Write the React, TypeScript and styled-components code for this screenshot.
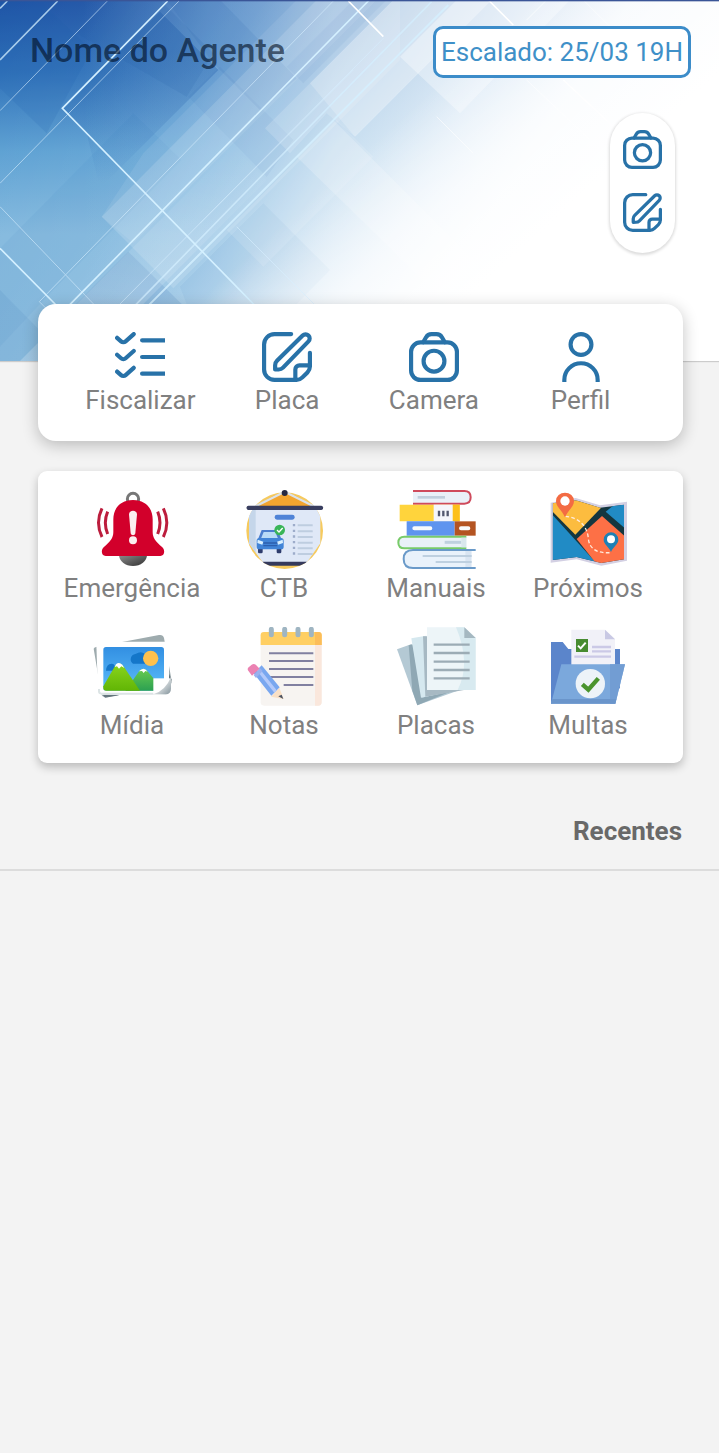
import React from "react";
import styled, { createGlobalStyle } from "styled-components";

const GlobalStyle = createGlobalStyle`
  *, *::before, *::after { box-sizing: border-box; }
  body {
    margin: 0;
    background: #f3f3f3;
    font-family: Roboto, "Liberation Sans", sans-serif;
  }
  button { font: inherit; color: inherit; }
`;

const Page = styled.main`
  min-height: 100vh;
  background: #f3f3f3;
`;

const Hero = styled.header`
  position: relative;
  padding: 26px 28px 108px 30px;
  background: #fff;
  box-shadow: 0 1px 1px rgba(0, 0, 0, 0.16);
`;

const Backdrop = styled.svg`
  position: absolute;
  inset: 0;
  width: 100%;
  height: 100%;
`;

const TopBar = styled.div`
  position: relative;
  display: flex;
  justify-content: space-between;
  align-items: flex-start;
`;

const AgentName = styled.h1`
  margin: 0;
  padding-top: 4px;
  font-size: 34px;
  line-height: 40px;
  font-weight: 500;
  color: rgba(0, 12, 30, 0.62);
`;

const Shift = styled.button`
  height: 52px;
  padding: 0 5px;
  border: 3px solid #3c8cc9;
  border-radius: 10px;
  background: #fff;
  color: #3f90c8;
  font-size: 26px;
  line-height: 40px;
  white-space: nowrap;
  cursor: pointer;
`;

const Shortcuts = styled.nav`
  position: relative;
  display: flex;
  flex-direction: column;
  align-items: center;
  gap: 24px;
  width: 65px;
  margin: 35px 16px 0 auto;
  padding: 17px 0 21px;
  border-radius: 33px;
  background: #fff;
  box-shadow: 0 1px 3px 1px rgba(0, 0, 0, 0.14);
`;

const IconButton = styled.button`
  display: flex;
  padding: 0;
  border: 0;
  background: none;
  cursor: pointer;
`;

const Content = styled.div`
  position: relative;
  display: flex;
  flex-direction: column;
  gap: 30px;
  margin-top: -57px;
  padding: 0 36px 0 38px;
`;

const Card = styled.section<{ $kind: "quick" | "menu" }>`
  display: grid;
  grid-template-columns: repeat(4, 1fr);
  row-gap: 21px;
  padding: ${(p) => (p.$kind === "quick" ? "28px 29px 23px" : "19px 19px 20px 18px")};
  border-radius: ${(p) => (p.$kind === "quick" ? "18px" : "9px")};
  background: #fff;
  box-shadow: ${(p) =>
    p.$kind === "quick"
      ? "0 4px 16px rgba(0, 0, 0, 0.24)"
      : "0 4px 10px rgba(0, 0, 0, 0.24)"};
`;

const Tile = styled.button`
  display: flex;
  flex-direction: column;
  align-items: center;
  padding: 0;
  border: 0;
  background: none;
  color: #808080;
  font-size: 26px;
  line-height: 36px;
  cursor: pointer;
`;

const Glyph = styled.svg<{ $size: number }>`
  display: block;
  width: ${(p) => p.$size}px;
  height: ${(p) => p.$size}px;
  fill: none;
  stroke: #2872a8;
  stroke-width: 2;
  stroke-linecap: round;
  stroke-linejoin: round;
`;

const Picture = styled.svg`
  display: block;
  width: 80px;
  height: 80px;
`;

const SectionTitle = styled.h2`
  margin: 0;
  padding: 52px 37px 22px;
  border-bottom: 2px solid #dcdcdc;
  text-align: right;
  font-size: 26px;
  line-height: 32px;
  font-weight: 700;
  color: #696969;
`;

function HeroBackdrop() {
  return (
    <Backdrop viewBox="0 0 2157 1083" preserveAspectRatio="xMidYMin slice" aria-hidden="true">
      <defs>
        <linearGradient id="sky" x1="0" y1="0" x2="0" y2="1">
          <stop offset="0" stopColor="#1f54a6" />
          <stop offset=".2" stopColor="#2d70b9" />
          <stop offset=".42" stopColor="#5a9fd2" />
          <stop offset=".65" stopColor="#80b7dd" />
          <stop offset="1" stopColor="#83b8dd" />
        </linearGradient>
        <linearGradient id="glow" gradientUnits="userSpaceOnUse" x1="0" y1="0" x2="1314" y2="876">
          <stop offset="0" stopColor="#fff" stopOpacity="0" />
          <stop offset=".2" stopColor="#fff" stopOpacity=".04" />
          <stop offset=".42" stopColor="#fff" stopOpacity=".1" />
          <stop offset=".58" stopColor="#fff" stopOpacity=".26" />
          <stop offset=".7" stopColor="#fff" stopOpacity=".5" />
          <stop offset=".86" stopColor="#fafcff" stopOpacity=".78" />
          <stop offset="1" stopColor="#fbfdff" stopOpacity=".93" />
        </linearGradient>
        <linearGradient id="whiteout" gradientUnits="userSpaceOnUse" x1="1040" y1="500" x2="1400" y2="900">
          <stop offset="0" stopColor="#fff" stopOpacity="0" />
          <stop offset=".5" stopColor="#fff" stopOpacity=".65" />
          <stop offset="1" stopColor="#fff" />
        </linearGradient>
        <linearGradient id="topLight" gradientUnits="userSpaceOnUse" x1="250" y1="0" x2="1000" y2="0">
          <stop offset="0" stopColor="#86bce4" stopOpacity="0" />
          <stop offset=".5" stopColor="#86bce4" stopOpacity=".5" />
          <stop offset="1" stopColor="#a6cbe8" stopOpacity=".75" />
        </linearGradient>
        <linearGradient id="fadeDown" x1="0" y1="0" x2="0" y2="1">
          <stop offset="0" stopColor="#fff" stopOpacity="0" />
          <stop offset="1" stopColor="#fff" stopOpacity=".22" />
        </linearGradient>
        <linearGradient id="shade" gradientUnits="userSpaceOnUse" x1="450" y1="150" x2="420" y2="560">
          <stop offset="0" stopColor="#1d5aa8" stopOpacity=".34" />
          <stop offset="1" stopColor="#1d5aa8" stopOpacity="0" />
        </linearGradient>
      </defs>
      <rect width="2157" height="1083" fill="url(#sky)" />
      <rect width="2157" height="1083" fill="url(#topLight)" />
      <rect width="2157" height="1083" fill="url(#glow)" />
      <path d="M190 325 480 35 655 210 300 565 260 400Z" fill="url(#shade)" />
      <g fill="#1d5aa8">
        <path d="M0 0H115L275 150 140 400 0 265Z" opacity=".14" />
        <path d="M230 100 330 0H480L640 160 560 290Z" opacity=".12" />
        <path d="M500 0H660L890 235 780 330 640 190Z" opacity=".1" />
        <path d="M0 745 400 340 545 480 160 870 0 1040Z" opacity=".05" />
        <path d="M0 870 210 1083H0Z" opacity=".08" />
        <path d="M385 755 545 912 450 1010H130Z" opacity=".12" />
        <path d="M565 290 660 200 880 420 800 530Z" opacity=".06" />
        <path d="M790 610 990 810 890 912H560L540 860Z" opacity=".05" />
        <path d="M860 200 1060 0H1160L910 250Z" opacity=".07" />
      </g>
      <g fill="#fff">
        <path d="M305 650 950 0H1200V180L520 865Z" opacity=".14" />
        <path d="M430 460 890 0H1130L400 730 305 650Z" opacity=".08" />
        <path d="M795 385 1180 0H1475L1065 410 980 340 870 460Z" opacity=".16" />
        <path d="M930 250 1180 0H1475L1065 410Z" opacity=".2" />
        <path d="M1200 170 1370 0H1710L1380 340Z" opacity=".34" />
        <path d="M60 1083 700 440 800 540 260 1083Z" fill="url(#fadeDown)" />
        <path d="M680 690 1010 360 1120 470 790 800Z" opacity=".12" />
        <path d="M890 470 1000 360 1440 800 1330 900Z" opacity=".2" />
      </g>
      <rect width="2157" height="1083" fill="url(#whiteout)" />
      <g fill="none" stroke="#d4f0ff" strokeWidth="5">
        <path d="M503 3 187 325 775 927" />
        <path d="M1108 0 180 944" />
        <path d="M1200 160 1345 15M1200 160 430 932" strokeWidth="6" opacity=".8" />
        <path d="M1295 5 390 932" opacity=".7" />
        <path d="M0 745 180 927" />
        <path d="M22 3 0 25M173 3 0 180" opacity=".75" />
        <path d="M1045 3 1150 110M1465 0 1540 75" stroke="#fff" />
        <path d="M1690 240 1840 380" stroke="#fff" />
      </g>
      <g fill="none" stroke="#d8efff" strokeWidth="3" opacity=".6">
        <path d="M322 3 0 332M540 0 0 550M1000 3 118 905 140 927" />
        <path d="M0 620 295 927M1150 115 345 927M710 680 950 920" />
        <path d="M1750 0 1830 80M1580 240 1770 420M1640 0 1580 60M1310 350 1420 460" stroke="#fff" />
        <path d="M600 670 1060 210" />
      </g>
      <rect width="2157" height="4" fill="#3a5597" />
    </Backdrop>
  );
}

const CameraIcon = ({ size }: { size: number }) => (
  <Glyph $size={size} viewBox="0 0 24 24" aria-hidden="true">
    <path d="M6.800 4.900 8.200 2.500A3 3 0 0 1 10.800 1h2.400a3 3 0 0 1 2.600 1.500L17.200 4.900" />
    <rect x="1" y="5" width="22" height="18" rx="4.500" />
    <circle cx="12" cy="14" r="5" />
  </Glyph>
);

const NoteIcon = ({ size }: { size: number }) => (
  <Glyph $size={size} viewBox="0 0 24 24" aria-hidden="true">
    <path d="M14 1H6a5 5 0 0 0-5 5v12a5 5 0 0 0 5 5h10.600a4 4 0 0 0 2.800-1.200l2.400-2.400A4 4 0 0 0 23 16.600V10" />
    <path d="M16 23v-5a2 2 0 0 1 2-2h5" />
    <path d="M6.300 18v-2.100a3 3 0 0 1 .9-2.100L19.500 1.700a1.950 1.950 0 0 1 2.800 2.800L10.100 17.100a3 3 0 0 1-2.100.9Z" />
  </Glyph>
);

const ChecklistIcon = () => (
  <Glyph $size={50} viewBox="0 0 24 24" aria-hidden="true">
    <path d="M1 2.800 2.900 4.500a1.600 1.600 0 0 0 2.200 0L9 1M1 10.900l1.900 1.700a1.600 1.600 0 0 0 2.200 0L9 9.100M1 19l1.900 1.700a1.600 1.600 0 0 0 2.200 0L9 17.200" />
    <path d="M13 4H25M13 12H25M13 20H25" />
  </Glyph>
);

const UserIcon = () => (
  <Glyph $size={50} viewBox="0 0 24 24" aria-hidden="true">
    <circle cx="12" cy="6" r="5" />
    <path d="M4 25v-2a8 8 0 0 1 16 0v2" />
  </Glyph>
);

const BellPicture = () => (
  <Picture viewBox="126 30 240 240" aria-hidden="true">
    <defs>
      <linearGradient id="clapper" x1="0" y1="0" x2="1" y2="1">
        <stop offset="0" stopColor="#8f8f8f" />
        <stop offset="1" stopColor="#303030" />
      </linearGradient>
    </defs>
    <circle cx="249" cy="57" r="17" fill="none" stroke="#777" strokeWidth="9" />
    <path d="M207 224a42 34 0 0 0 84 0Z" fill="url(#clapper)" />
    <path
      d="M249 60c36 0 59 23 59 58v38c0 18 9 28 29 46 9 9 7 26-6 26H167c-13 0-15-17-6-26 20-18 29-28 29-46v-38c0-35 23-58 59-58Z"
      fill="#d2002b"
    />
    <path d="M237 103c0-14 24-14 24 0l-5 57c-1 8-13 8-14 0Z" fill="#fbeef0" />
    <circle cx="249" cy="181" r="12" fill="#fbeef0" />
    <g fill="none" stroke="#bc1d3d" strokeWidth="9">
      <path d="M173 95q-14 33 0 67M156 85q-21 43 0 86M323 95q14 33 0 67M340 85q21 43 0 86" />
    </g>
  </Picture>
);

const BoardPicture = () => (
  <Picture viewBox="118 30 240 240" aria-hidden="true">
    <defs>
      <clipPath id="boardDisc">
        <circle cx="240" cy="152" r="115" />
      </clipPath>
    </defs>
    <circle cx="240" cy="152" r="115" fill="#f6ca5e" />
    <g clipPath="url(#boardDisc)">
      <path d="M133 85H347V190L306 248H175L133 190Z" fill="#dfe8f7" />
      <path d="M133 85h20v133l-20-28Z" fill="#c5d6ea" />
      <path d="M174 245H306V257H180Z" fill="#353a5c" />
    </g>
    <path d="M153 79 205 48q35-18 70 0l52 31Z" fill="#f3a52f" />
    <path d="M153 79 234 38M327 79 246 38" fill="none" stroke="#dce3e8" strokeWidth="7" />
    <circle cx="240" cy="39" r="9" fill="#252943" />
    <rect x="126" y="77" width="229" height="13" rx="5" fill="#393e5f" />
    <rect x="210" y="104" width="60" height="15" rx="7" fill="#4f83d7" />
    <rect x="160" y="203" width="14" height="17" rx="4" fill="#2d3c6d" />
    <rect x="216" y="203" width="14" height="17" rx="4" fill="#2d3c6d" />
    <path d="M171 150h47l14 30H159Z" fill="#4c7fce" />
    <path d="M177 156h35l9 22h-53Z" fill="#b9dbf7" />
    <rect x="156" y="174" width="81" height="34" rx="8" fill="#4184d7" />
    <path d="M159 179l17 6-3 9-15-5M234 179l-17 6 3 9 15-5" fill="#d9f0ff" />
    <path d="M176 189h42M176 197h42" stroke="#2c5fae" strokeWidth="4" />
    <circle cx="225" cy="150" r="16" fill="#39b558" />
    <path d="m217 150 6 6 11-12" fill="none" stroke="#fff" strokeWidth="4" />
    <path d="M279 136h45M279 154h45M279 171h45M279 188h45M279 205h45M279 222h45" stroke="#becde0" strokeWidth="6" />
    <path d="M268 132v95" stroke="#9dacca" strokeWidth="7" strokeDasharray="7 10" />
  </Picture>
);

const BooksPicture = () => (
  <Picture viewBox="109 30 240 240" aria-hidden="true">
    <path d="M160 33H314q19 0 19 19t-19 19H160" fill="#eaf0f8" stroke="#cf4a5c" strokeWidth="6" />
    <path d="M174 52h82" stroke="#c1cfdd" strokeWidth="8" />
    <path d="M120 74H300V124H120Z" fill="#ffd43c" />
    <path d="M279 74h21v50h-21Z" fill="#fdc01b" />
    <path d="M222 74h57v50h-57Z" fill="#f5f6fb" />
    <path d="M238 92v17M251 92v17M264 92v17" stroke="#53586f" strokeWidth="7" />
    <path d="M141 124H285V167H141Z" fill="#5f94ef" />
    <path d="M285 124h63v43h-63Z" fill="#b45422" />
    <path d="M164 145h48M304 145h22" stroke="#f8fafc" strokeWidth="12" strokeLinecap="round" />
    <path d="M320 170H134q-18 0-18 17.500t18 17.500H320" fill="#e9f1f8" stroke="#78cb69" strokeWidth="6" />
    <path d="M255 187h50" stroke="#bfd1df" strokeWidth="9" />
    <path d="M348 210H160q-28 0-28 27t28 27H348" fill="#e9f2fb" stroke="#6a9ac9" strokeWidth="6" />
    <path d="M317 213h19v48h-19Z" fill="#d9e5f2" />
    <path d="M336 213h14v48h-14Z" fill="#fff" />
    <path d="M189 228h147M228 246h108" stroke="#bed0e0" strokeWidth="6" />
    <path d="M305 173h15v29h-15Z" fill="#d9e7ed" />
  </Picture>
);

const MapPicture = () => (
  <Picture viewBox="102 30 240 240" aria-hidden="true">
    <defs>
      <clipPath id="mapSheet">
        <path d="M116 70 185 61 258 83 330 74V238L262 249 188 231 116 240Z" />
      </clipPath>
    </defs>
    <path d="M110 68 185 54 258 76 339 65V242L262 257 188 238 110 248Z" fill="#d3d0e3" />
    <g clipPath="url(#mapSheet)">
      <path d="M100 40H350V270H100Z" fill="#14363f" />
      <path d="M116 105 242 244 230 270H100Z" fill="#218bc5" />
      <path d="M116 55H250L260 85 184 164 116 95Z" fill="#fcbc3f" />
      <path d="M264 108 335 171V270H262L188 177Z" fill="#fd7046" />
      <path d="M275 95 300 75H340V151Z" fill="#218bc5" />
    </g>
    <path d="M154 109c36 3 65 24 69 66 2 26 19 46 66 43" fill="none" stroke="#ffeadc" strokeWidth="4" strokeDasharray="11 7" />
    <path d="M153 112c-8-20-27-31-27-49a27 25 0 0 1 54 0c0 18-19 29-27 49Z" fill="#f36b43" />
    <circle cx="153" cy="63" r="14" fill="#fff" />
    <path d="M291 216c-7-17-22-23-22-37a22 22 0 0 1 44 0c0 14-15 20-22 37Z" fill="#1d80b5" />
    <circle cx="291" cy="178" r="12" fill="#fff" />
  </Picture>
);

const PhotosPicture = () => (
  <Picture viewBox="126 36 240 240" aria-hidden="true">
    <defs>
      <linearGradient id="photoSky" x1="0" y1="0" x2="0" y2="1">
        <stop offset="0" stopColor="#328fe2" />
        <stop offset="1" stopColor="#5cbdfb" />
      </linearGradient>
      <linearGradient id="hillNear" x1="0" y1="0" x2="0" y2="1">
        <stop offset="0" stopColor="#8bd51d" />
        <stop offset="1" stopColor="#61b505" />
      </linearGradient>
      <linearGradient id="hillFar" x1="0" y1="0" x2="0" y2="1">
        <stop offset="0" stopColor="#69cc4e" />
        <stop offset="1" stopColor="#2ca052" />
      </linearGradient>
      <linearGradient id="curl" x1="0" y1="0" x2="1" y2="1">
        <stop offset=".3" stopColor="#f7f8f8" />
        <stop offset="1" stopColor="#84949c" />
      </linearGradient>
    </defs>
    <path d="M131 101q1-5 10-6L327 60q12-2 15 9l23 128q1 11-9 13L171 247q-14 1-17-9Z" fill="#9eabae" />
    <path d="M155 235 208 241 165 248ZM350 160l15 35-15 15Z" fill="#65767e" />
    <path d="M139 88q0-8 8-8H348q9 0 9 8V229q0 10-9 10H157q-12 0-13-10Z" fill="#fff" />
    <path d="M147 222V229q0 7 8 7H347q9 0 9-7" fill="none" stroke="#dce4e5" strokeWidth="6" />
    <rect x="160" y="96" width="182" height="131" rx="8" fill="url(#photoSky)" />
    <path d="M249 146a16 16 0 0 1 7-29q20-12 31 2v27ZM168 167q2-24 22-20l16 20Z" fill="#1476c9" />
    <path d="M226 227 268 168q12-14 24 0l50 59Z" fill="url(#hillFar)" />
    <path d="M160 214 195 153q12-16 25 0l50 74H169q-9 0-9-8Z" fill="url(#hillNear)" />
    <path d="m194 156 4-8q9-8 19 1l6 10-9-5-7 7-6-7ZM267 169q14-16 26 1l-7-2-5 6-5-6Z" fill="#fff" />
    <circle cx="302" cy="130" r="23" fill="#ffc14d" />
    <path d="M310 190h50v48h-50Z" fill="#fff" />
    <path d="M311 237q37-12 52-52v36q0 16-16 17Z" fill="url(#curl)" />
  </Picture>
);

const NotepadPicture = () => (
  <Picture viewBox="583 36 240 240" aria-hidden="true">
    <rect x="633" y="51" width="183" height="221" rx="10" fill="#f7f4f1" />
    <path d="M796 80h20v181q0 11-10 11h-10Z" fill="#fae7dc" />
    <path d="M633 90V61q0-10 10-10H806q10 0 10 10V90Z" fill="#ffcf63" />
    <path d="M796 51h10q10 0 10 10v29h-20Z" fill="#fcbd59" />
    <path d="M665 43v16M705 43v16M745 43v16M785 43v16" stroke="#9fb5c2" strokeWidth="15" strokeLinecap="round" />
    <path d="M658 115H791M658 138H791M658 162H791M658 186H791M702 210H791" stroke="#8180a0" strokeWidth="6" />
    <path d="M664 245 689 218 702 252Z" fill="#fae0c5" />
    <path d="m612 175 24-24 54 66-25 25Z" fill="#79a7ef" />
    <path d="m621 166 7-7 53 67-7 7Z" fill="#b3c9fa" />
    <path d="m597 169q-6-7 0-12l9-8q7-5 13 1l11 11-23 21Z" fill="#eb82b2" />
    <path d="m612 181 19-21 8 8-20 21Z" fill="#9ab1ed" />
    <path d="m686 244 10-5 5 13Z" fill="#4c5361" />
  </Picture>
);

const PapersPicture = () => (
  <Picture viewBox="109 36 240 240" aria-hidden="true">
    <path d="M112 103 154 88 200 110 300 225 173 271Z" fill="#b4c9d4" />
    <path d="m147 91 12-3 28 160 97-23-111 46-15-44Z" fill="#8fa8b4" />
    <path d="M155 70 200 62V215L270 230 184 248Z" fill="#d5e8ef" />
    <path d="M190 64h12v161h111L197 245Z" fill="#a7b9c3" />
    <path d="M202 37H314L348 69V225H202Z" fill="#edf5f8" />
    <path d="M289 37h25l34 32v156h-54q41-80-5-188Z" fill="#d8eaf0" />
    <path d="M314 37 348 69H314Z" fill="#a5b8c1" />
    <path d="M222 89H330M222 114H330M222 140H330M222 165H330M222 190H330" stroke="#9cacb5" strokeWidth="7" />
  </Picture>
);

const FolderPicture = () => (
  <Picture viewBox="567 36 240 240" aria-hidden="true">
    <path d="M576 81h35l17 21H783V220L576 266Z" fill="#5b85cb" />
    <path d="M637 44H738L768 73V160H637Z" fill="#f1f1f8" />
    <path d="M738 44 768 73H738Z" fill="#c9c9e4" />
    <path d="M651 72h36v39h-36Z" fill="#478b31" />
    <path d="m657 92 8 8 15-17" fill="none" stroke="#fff" strokeWidth="6" />
    <path d="M699 96h57M699 109h57M646 125h110" stroke="#cbc9e6" strokeWidth="7" />
    <path d="M607 148H798L769 266H576Z" fill="#7ba8dc" />
    <path d="M753 148H798L769 266H753Z" fill="#729dd3" />
    <path d="M580 252H772L769 266H576Z" fill="#6a95cb" />
    <circle cx="694" cy="206" r="44" fill="#edf3f8" />
    <path d="m670 208 18 16 30-34" fill="none" stroke="#4a942e" strokeWidth="13" />
  </Picture>
);

const quickActions = [
  { label: "Fiscalizar", icon: <ChecklistIcon /> },
  { label: "Placa", icon: <NoteIcon size={50} /> },
  { label: "Camera", icon: <CameraIcon size={50} /> },
  { label: "Perfil", icon: <UserIcon /> },
];

const menuItems = [
  { label: "Emergência", icon: <BellPicture /> },
  { label: "CTB", icon: <BoardPicture /> },
  { label: "Manuais", icon: <BooksPicture /> },
  { label: "Próximos", icon: <MapPicture /> },
  { label: "Mídia", icon: <PhotosPicture /> },
  { label: "Notas", icon: <NotepadPicture /> },
  { label: "Placas", icon: <PapersPicture /> },
  { label: "Multas", icon: <FolderPicture /> },
];

export default function App() {
  return (
    <Page>
      <GlobalStyle />
      <Hero>
        <HeroBackdrop />
        <TopBar>
          <AgentName>Nome do Agente</AgentName>
          <Shift type="button">Escalado: 25/03 19H</Shift>
        </TopBar>
        <Shortcuts>
          <IconButton type="button" aria-label="Camera">
            <CameraIcon size={39} />
          </IconButton>
          <IconButton type="button" aria-label="Placa">
            <NoteIcon size={39} />
          </IconButton>
        </Shortcuts>
      </Hero>
      <Content>
        <Card $kind="quick">
          {quickActions.map((item) => (
            <Tile key={item.label} type="button">
              {item.icon}
              {item.label}
            </Tile>
          ))}
        </Card>
        <Card $kind="menu">
          {menuItems.map((item) => (
            <Tile key={item.label} type="button">
              {item.icon}
              {item.label}
            </Tile>
          ))}
        </Card>
      </Content>
      <SectionTitle>Recentes</SectionTitle>
    </Page>
  );
}
